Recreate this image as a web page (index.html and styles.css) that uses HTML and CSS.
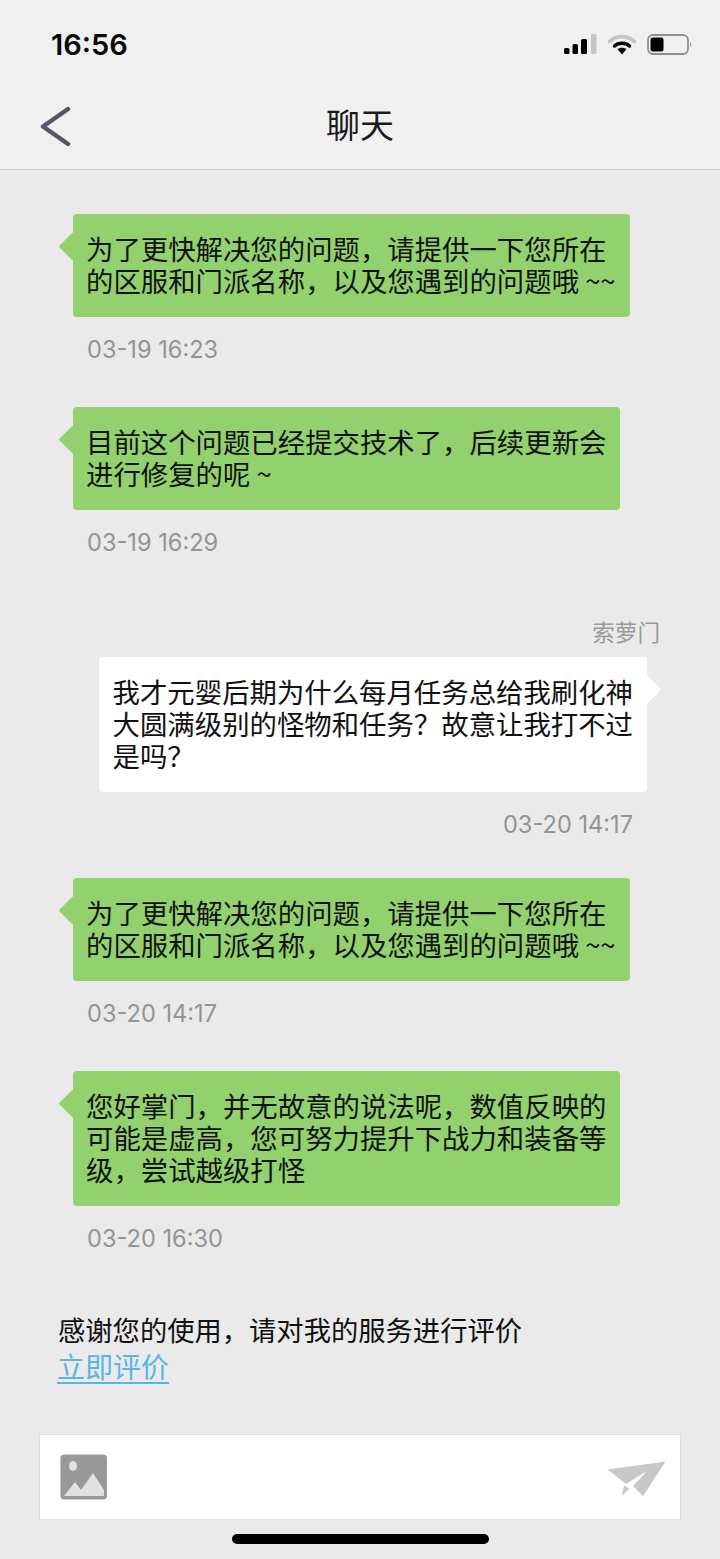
FILE: index.html
```html
<!DOCTYPE html>
<html lang="zh-CN">
<head>
<meta charset="utf-8">
<title>聊天</title>
<link rel="stylesheet" href="styles.css">
</head>
<body>
<div class="app">
  <header class="top">
    <div class="status">
      <span class="clock">16:56</span>
      <div class="status-icons">
        <svg class="ico-signal" width="34" height="21" viewBox="-0.5 0 34 21">
          <rect x="0.5" y="14" width="5.5" height="6" rx="1.5" fill="#000"/>
          <rect x="9" y="10" width="5.5" height="10" rx="1.5" fill="#000"/>
          <rect x="17.5" y="5" width="6" height="15" rx="1.5" fill="#000"/>
          <rect x="27.5" y="0" width="5.5" height="20" rx="1.5" fill="#c4c4c4"/>
        </svg>
        <svg class="ico-wifi" width="28" height="21" viewBox="0 0 28 21">
          <path d="M1.5 7.5C8.5 1 19.5 1 26.5 7.5" fill="none" stroke="#c4c4c4" stroke-width="3.6" stroke-linecap="round"/>
          <path d="M6.5 12C10.5 8.4 17.5 8.4 21.5 12" fill="none" stroke="#000" stroke-width="3.4" stroke-linecap="round"/>
          <path d="M9.6 15.2C12 13.2 16 13.2 18.4 15.2L14 20.5Z" fill="#000"/>
        </svg>
        <svg class="ico-battery" width="45" height="21" viewBox="0 0 45 21">
          <rect x="1" y="1" width="40" height="19" rx="5" fill="none" stroke="#8f8f8f" stroke-width="1.8"/>
          <rect x="3.5" y="3.5" width="13" height="14" rx="2.5" fill="#000"/>
          <path d="M43.2 8C44.6 8.6 44.6 12.4 43.2 13Z" fill="#8f8f8f"/>
        </svg>
      </div>
    </div>
    <div class="nav">
      <svg class="back" width="32" height="41" viewBox="0 0 32 41">
        <path d="M28 3L3 20.500L28 38" fill="none" stroke="#555565" stroke-width="4.400" stroke-linecap="round" stroke-linejoin="round"/>
      </svg>
      <h1 class="title">聊天</h1>
    </div>
  </header>

  <main class="chat">
    <div class="msg">
      <p class="bubble green">为了更快解决您的问题，请提供一下您所在<br>的区服和门派名称，以及您遇到的问题哦 ~~</p>
      <time class="stamp">03-19 16:23</time>
    </div>
    <div class="msg">
      <p class="bubble green">目前这个问题已经提交技术了，后续更新会<br>进行修复的呢 ~</p>
      <time class="stamp">03-19 16:29</time>
    </div>
    <div class="msg mine">
      <span class="sender">索萝门</span>
      <p class="bubble white">我才元婴后期为什么每月任务总给我刷化神<br>大圆满级别的怪物和任务？故意让我打不过<br>是吗？</p>
      <time class="stamp">03-20 14:17</time>
    </div>
    <div class="msg">
      <p class="bubble green">为了更快解决您的问题，请提供一下您所在<br>的区服和门派名称，以及您遇到的问题哦 ~~</p>
      <time class="stamp">03-20 14:17</time>
    </div>
    <div class="msg">
      <p class="bubble green">您好掌门，并无故意的说法呢，数值反映的<br>可能是虚高，您可努力提升下战力和装备等<br>级，尝试越级打怪</p>
      <time class="stamp">03-20 16:30</time>
    </div>
    <div class="rate">
      <p class="rate-text">感谢您的使用，请对我的服务进行评价</p>
      <a class="rate-link" href="#">立即评价</a>
    </div>
  </main>

  <footer class="composer">
    <svg class="ico-image" width="48" height="46" viewBox="0 0 48 46">
      <rect x="0.500" y="0.500" width="46.500" height="45" rx="4" fill="#999"/>
      <ellipse cx="13" cy="12" rx="4" ry="5" fill="#e2e2e2"/>
      <path d="M4 42L15 28L21 36L33 19L44 36V42Z" fill="#e2e2e2"/>
    </svg>
    <svg class="ico-send" width="59" height="36" viewBox="0 0 59 36">
      <path d="M0.500 8.500L58.500 0.500L36 35L26 25L40 10L19 23Z" fill="#c8c8c8"/>
      <path d="M17 24.500L22.500 27.500L15 35Z" fill="#c8c8c8"/>
    </svg>
  </footer>
  <div class="home-row"><span class="home"></span></div>
</div>
</body>
</html>
```
FILE: styles.css
```css
* { box-sizing: border-box; }
html, body { margin: 0; padding: 0; }
body {
  background: #eaeaea;
  font-family: "Noto Sans CJK SC", "Liberation Sans", sans-serif;
  color: #111;
}
.app {
  width: 720px;
  height: 1559px;
  display: flex;
  flex-direction: column;
  overflow: hidden;
}
.top {
  height: 170px;
  background: #f0f0f0;
  border-bottom: 1px solid #cfcfcf;
}
.status {
  height: 88px;
  padding: 0 28px 0 51px;
  display: flex;
  align-items: center;
  justify-content: space-between;
}
.clock {
  font-family: Inter, "Liberation Sans", sans-serif;
  font-size: 29px;
  font-weight: 600;
  color: #0a0a0a;
}
.status-icons {
  display: flex;
  align-items: center;
  gap: 11px;
}
.nav {
  height: 81px;
  position: relative;
  display: flex;
  align-items: center;
  justify-content: center;
}
.back {
  position: absolute;
  left: 40px;
  top: 18px;
}
.title {
  margin: 0 0 10px;
  font-size: 34px;
  font-weight: 400;
  line-height: 1;
  color: #1a1a1a;
}
.chat {
  flex: 1;
  padding: 44px 0 0 73px;
  min-height: 0;
}
.msg {
  display: flex;
  flex-direction: column;
  align-items: flex-start;
  margin-bottom: 44px;
}
.mine {
  align-items: flex-end;
  padding-right: 73px;
  margin-top: 59px;
  margin-bottom: 40px;
}
.bubble {
  position: relative;
  margin: 0;
  border-radius: 4px;
  font-size: 27.400px;
  line-height: 32px;
  white-space: nowrap;
  color: #111;
}
.bubble::before {
  content: "";
  position: absolute;
  top: 22px;
  width: 21px;
  height: 21px;
  transform: rotate(45deg);
  background: inherit;
}
.green {
  padding: 18px 14px 21px 13px;
  background: #92d16e;
}
.green::before { left: -10px; }
.white {
  padding: 18px 14px 21px;
  background: #fff;
}
.white::before { right: -10px; }
.stamp {
  margin: 20px 0 0 14px;
  font-family: Inter, "Liberation Sans", sans-serif;
  font-size: 23.600px;
  line-height: 26px;
  color: #949494;
}
.mine .stamp {
  margin: 20px 14px 0 0;
}
.sender {
  margin: 0 -13px 9px 0;
  font-size: 22.600px;
  line-height: 33px;
  color: #9a9a9a;
}
.rate {
  margin: 0 0 0 -15px;
  padding-top: 15px;
}
.rate-text {
  margin: 0;
  font-size: 27.300px;
  line-height: 37px;
  color: #111;
}
.rate-link {
  display: inline-block;
  margin-left: -1px;
  font-size: 28px;
  line-height: 37px;
  color: #5cb3e6;
  text-decoration: underline;
  text-decoration-thickness: 2px;
  text-underline-offset: 4px;
}
.composer {
  height: 86px;
  margin: 0 39px;
  padding: 0 14px 0 20px;
  background: #fff;
  border: 1px solid #dedede;
  display: flex;
  align-items: center;
  justify-content: space-between;
}
.ico-image { margin-top: -1px; }
.ico-send { margin-top: 3px; }
.home-row {
  height: 39px;
  display: flex;
  justify-content: center;
  padding-top: 14px;
}
.home {
  width: 257px;
  height: 10px;
  border-radius: 5px;
  background: #000;
}
```
